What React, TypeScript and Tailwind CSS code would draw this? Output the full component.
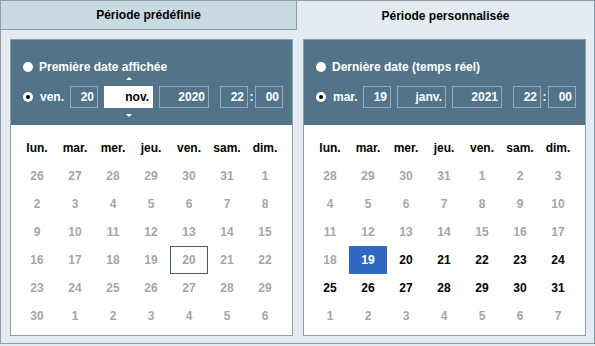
import React from "react";

type Cell = { d: number; kind: "out" | "in" | "sel" | "focus" };

const WEEKDAYS = ["lun.", "mar.", "mer.", "jeu.", "ven.", "sam.", "dim."];

function buildLeft(): Cell[] {
    const cells: Cell[] = [];
    const days = [26, 27, 28, 29, 30, 31, ...Array.from({ length: 30 }, (_, i) => i + 1), 1, 2, 3, 4, 5, 6];
    for (const d of days) cells.push({ d, kind: "out" });
    // 20 nov. is outlined
    cells[25] = { d: 20, kind: "focus" };
    return cells;
}

function buildRight(): Cell[] {
    const cells: Cell[] = [];
    for (const d of [28, 29, 30, 31]) cells.push({ d, kind: "out" });
    for (let d = 1; d <= 31; d++) {
        if (d < 19) cells.push({ d, kind: "out" });
        else if (d === 19) cells.push({ d, kind: "sel" });
        else cells.push({ d, kind: "in" });
    }
    for (let d = 1; d <= 7; d++) cells.push({ d, kind: "out" });
    return cells;
}

function Radio({ checked }: { checked?: boolean }) {
    return (
        <span className="flex h-[10px] w-[10px] items-center justify-center rounded-full bg-white">
            {checked && <span className="h-[4px] w-[4px] rounded-full bg-black" />}
        </span>
    );
}

function Box({ value, width, active }: { value: string; width: string; active?: boolean }) {
    return (
        <div
            className={`flex h-[22px] items-center justify-end border pr-[3px] ${width} ${
                active ? "border-white bg-white text-black" : "border-[#8eaabb] text-white"
            }`}
        >
            {value}
        </div>
    );
}

function Panel({
    label,
    weekday,
    day,
    month,
    year,
    cells,
    monthActive,
}: {
    label: string;
    weekday: string;
    day: string;
    month: string;
    year: string;
    cells: Cell[];
    monthActive?: boolean;
}) {
    return (
        <div className="flex h-[297px] w-[283px] flex-col border border-[#8e9ea8]">
            <div className="h-[85px] bg-[#527489] pl-[12px] pt-[20px] text-white">
                <div className="flex h-[14px] items-center gap-[6px]">
                    <Radio />
                    <span>{label}</span>
                </div>
                <div className="mt-[12px] flex h-[22px] items-center">
                    <Radio checked />
                    <span className="ml-[7px] w-[30px]">{weekday}</span>
                    <Box value={day} width="w-[28px]" />
                    <div className="relative ml-[6px]">
                        {monthActive && (
                            <>
                                <span className="absolute left-1/2 top-[-9px] h-0 w-0 -translate-x-1/2 border-x-[3px] border-b-[3px] border-x-transparent border-b-white" />
                                <span className="absolute bottom-[-9px] left-1/2 h-0 w-0 -translate-x-1/2 border-x-[3px] border-t-[3px] border-x-transparent border-t-white" />
                            </>
                        )}
                        <Box value={month} width="w-[49px]" active={monthActive} />
                    </div>
                    <div className="ml-[6px]">
                        <Box value={year} width="w-[50px]" />
                    </div>
                    <div className="ml-[11px]">
                        <Box value="22" width="w-[28px]" />
                    </div>
                    <span className="w-[7px] text-center">:</span>
                    <Box value="00" width="w-[28px]" />
                </div>
            </div>
            <div className="flex-1 bg-white px-[7px] pt-[9px]">
                <div className="grid grid-cols-[repeat(7,38px)] auto-rows-[28px]">
                    {WEEKDAYS.map((w) => (
                        <div key={w} className="flex items-center justify-center text-black">
                            {w}
                        </div>
                    ))}
                    {cells.map((c, i) => (
                        <div
                            key={i}
                            className={`flex items-center justify-center ${
                                c.kind === "out"
                                    ? "text-[#a6a6a6]"
                                    : c.kind === "in"
                                    ? "text-black"
                                    : c.kind === "sel"
                                    ? "bg-[#3068c1] text-white"
                                    : "border border-[#3d5f80] text-[#a6a6a6]"
                            }`}
                        >
                            {c.d}
                        </div>
                    ))}
                </div>
            </div>
        </div>
    );
}

export default function App() {
    return (
        <div className="h-[346px] w-[595px] bg-[#e3ecf2] font-['Liberation_Sans',Arial,sans-serif] text-[12px] font-bold">
            <div className="flex h-[30px]">
                <div className="flex w-[297px] items-center justify-center border border-[#8e9ea8] bg-[#c9dae3] text-black">
                    Période prédéfinie
                </div>
                <div className="flex w-[298px] justify-center border-r border-t border-[#8e9ea8] pt-[6px] text-black">
                    Période personnalisée
                </div>
            </div>
            <div className="flex h-[314px] gap-[10px] border-b border-l border-r border-[#8e9ea8] pl-[9px] pt-[9px]">
                <Panel
                    label="Première date affichée"
                    weekday="ven."
                    day="20"
                    month="nov."
                    year="2020"
                    cells={buildLeft()}
                    monthActive
                />
                <Panel
                    label="Dernière date (temps réel)"
                    weekday="mar."
                    day="19"
                    month="janv."
                    year="2021"
                    cells={buildRight()}
                />
            </div>
        </div>
    );
}
